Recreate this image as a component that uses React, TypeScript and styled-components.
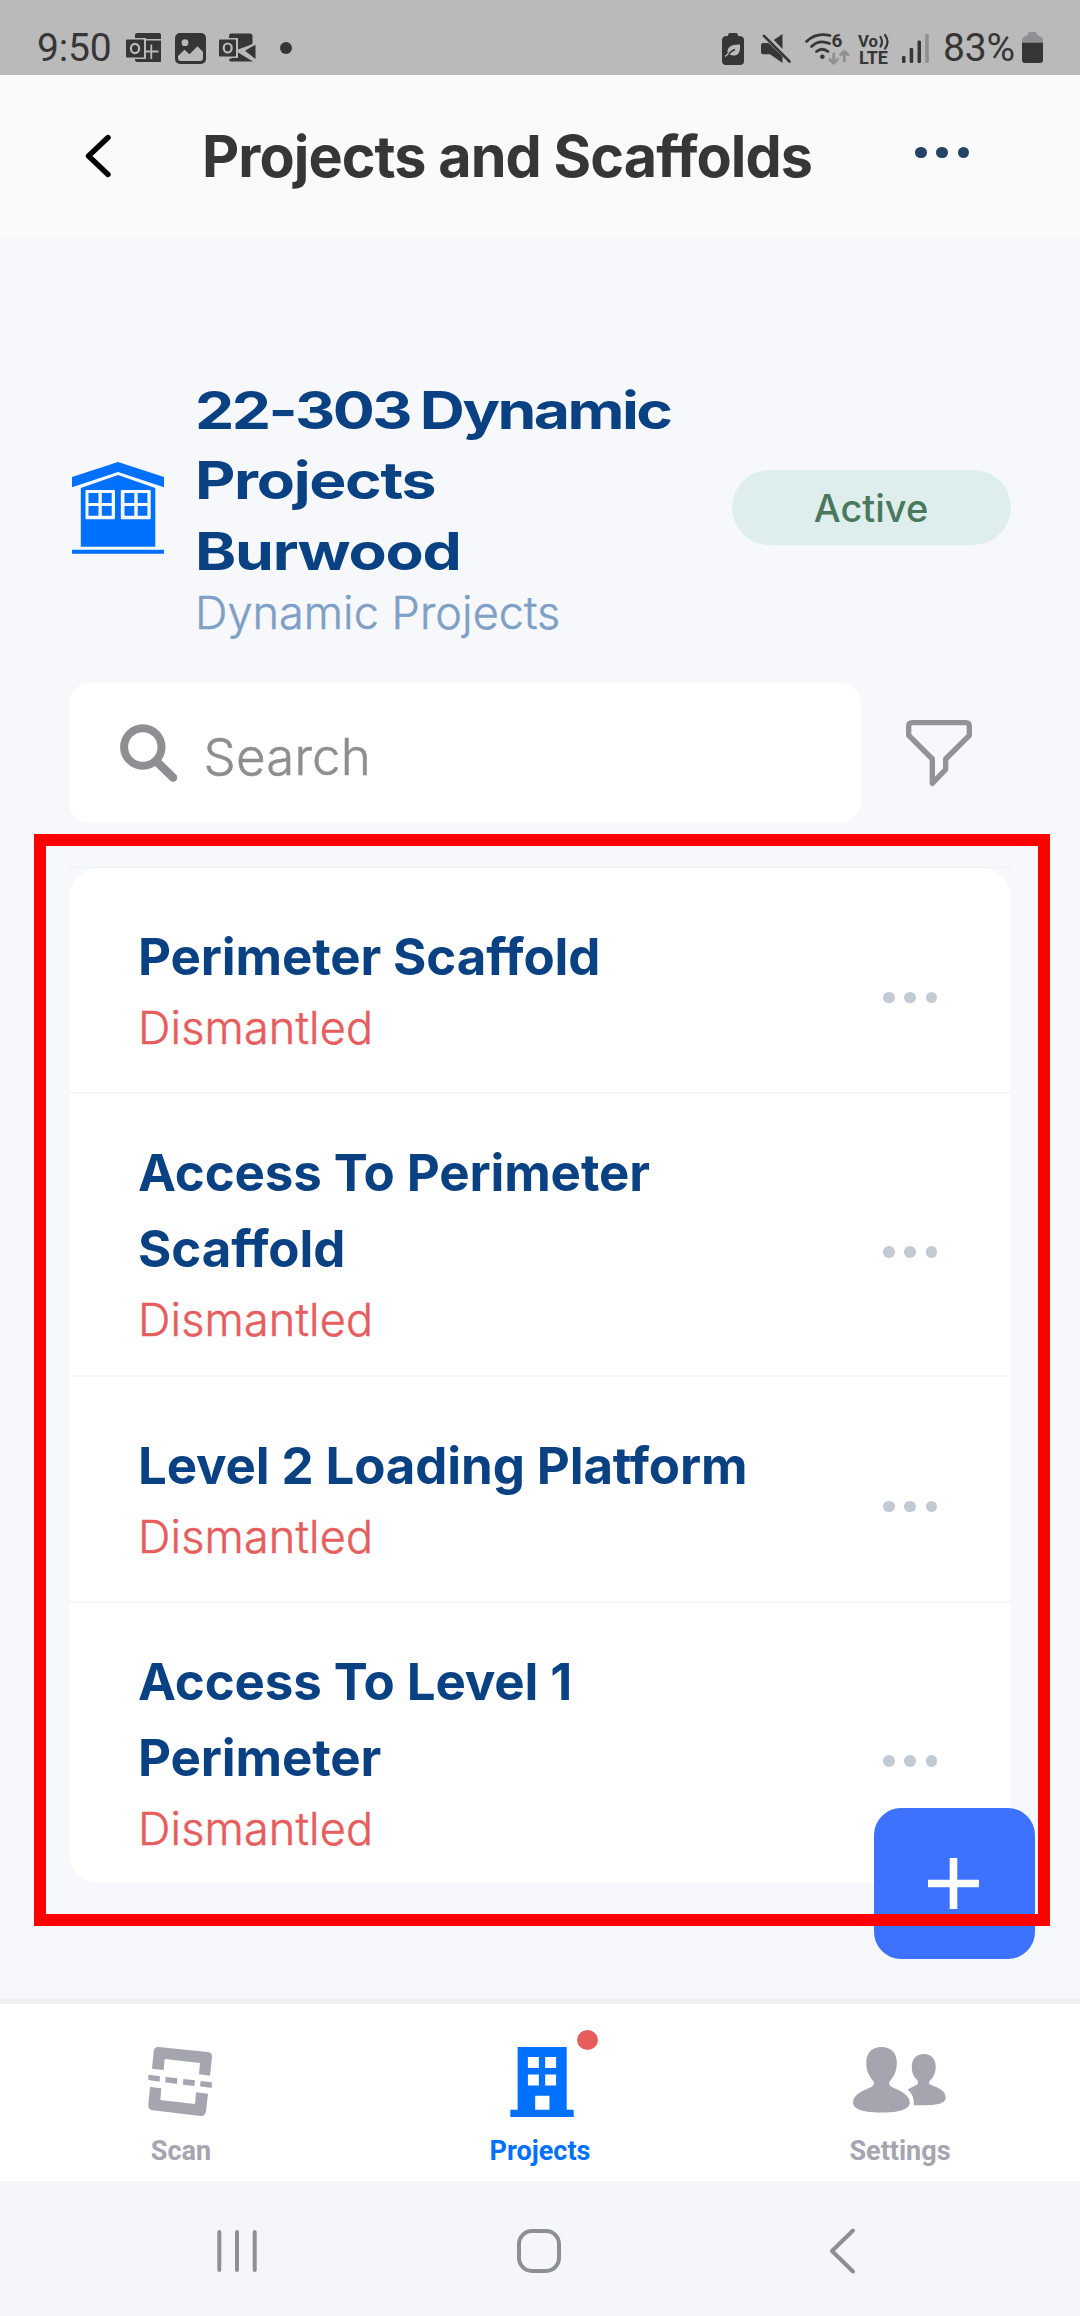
import React from "react";
import styled, { createGlobalStyle } from "styled-components";

const GlobalStyle = createGlobalStyle`
  * { box-sizing: border-box; }
  body { margin: 0; background: #f7f8fc; }
  svg { display: block; flex: none; overflow: visible; }
`;

const DARK = "#363636";
const NAVY = "#0a4182";
const BLUE = "#0071ff";
const MUTED = "#a5a5b0";

const Screen = styled.div`
  position: relative;
  display: flex;
  flex-direction: column;
  width: 1080px;
  height: 2316px;
  overflow: hidden;
  background: #f7f8fc;
  font-family: Inter, "Liberation Sans", sans-serif;
`;

const StatusBar = styled.div`
  display: flex;
  justify-content: space-between;
  align-items: flex-start;
  height: 75px;
  padding: 32px 37px 0;
  background: #bababa;
`;

const StatusGroup = styled.div`
  display: flex;
  align-items: flex-start;
`;

const StatusText = styled.span<{ $width: number }>`
  width: ${(p) => p.$width}px;
  font: 400 39px/32px Roboto, sans-serif;
  letter-spacing: -0.2px;
  color: ${DARK};
  white-space: nowrap;
`;

const StatusIcon = styled.svg<{ $gap: number; $top?: number }>`
  margin-left: ${(p) => p.$gap}px;
  margin-top: ${(p) => p.$top ?? 1}px;
`;

const Header = styled.header`
  display: flex;
  align-items: center;
  height: 162px;
  padding: 0 111px 0 85px;
  background: #fafafa;
`;

const Title = styled.h1`
  flex: 1;
  margin: 0 0 0 87px;
  font-size: 57.5px;
  line-height: 70px;
  font-weight: 700;
  letter-spacing: -0.93px;
  white-space: nowrap;
  color: ${DARK};
`;

const Dots = styled.span<{ $color: string }>`
  display: flex;
  gap: 9.6px;
  i {
    width: 11.5px;
    height: 11.5px;
    border-radius: 50%;
    background: ${(p) => p.$color};
  }
`;

const HeaderDots = styled(Dots)`
  margin-bottom: 7px;
`;

const Content = styled.main`
  flex: 1;
  padding: 138px 69px 0;
`;

const ProjectSummary = styled.section`
  display: flex;
  align-items: center;
  height: 265px;
  padding-left: 3px;
`;

const ProjectText = styled.div`
  flex: 1;
  margin-left: 32px;
`;

const ProjectName = styled.h2`
  width: 440px;
  margin: 1px 0 -1px -1.5px;
  transform: scaleX(1.2);
  transform-origin: left;
  font-size: 52px;
  line-height: 70.4px;
  font-weight: 700;
  word-spacing: -2px;
  color: ${NAVY};
  white-space: nowrap;
`;

const NameLine = styled.span<{ $tracking: number }>`
  display: block;
  letter-spacing: ${(p) => p.$tracking}px;
`;

const ClientName = styled.p`
  margin: 0 0 0 -1px;
  font-size: 45px;
  line-height: 54px;
  font-weight: 300;
  letter-spacing: 0.05px;
  -webkit-text-stroke: 0.5px currentColor;
  white-space: nowrap;
  color: #7e9fc6;
`;

const StatusPill = styled.span`
  display: flex;
  align-items: center;
  justify-content: center;
  width: 279px;
  height: 75px;
  padding-right: 1px;
  border-radius: 38px;
  background: #deeeec;
  font-size: 38px;
  font-weight: 500;
  color: #4a785c;
`;

const SearchRow = styled.div`
  display: flex;
  align-items: center;
  gap: 45px;
  margin-top: 43px;
`;

const SearchBox = styled.label`
  display: flex;
  align-items: center;
  width: 792px;
  height: 140px;
  padding: 0 0 0 51px;
  border-radius: 21px;
  background: #fff;
`;

const Placeholder = styled.span`
  margin: 8px 0 0 24.5px;
  font-size: 51px;
  line-height: 62px;
  font-weight: 300;
  letter-spacing: 0.2px;
  -webkit-text-stroke: 0.5px currentColor;
  color: #8e8e90;
`;

const ScaffoldPanel = styled.section`
  margin-top: 44px;
  border-top: 1px solid #f0f1f4;
`;

const ScaffoldList = styled.ul`
  height: 1015px;
  margin: 0;
  padding: 0;
  overflow: hidden;
  border-radius: 30px;
  background: #fff;
  list-style: none;
`;

const ScaffoldRow = styled.li`
  display: flex;
  align-items: center;
  justify-content: space-between;
  min-height: 226px;
  padding: 41px 74px 22px 69px;
  border-bottom: 2px solid #f5f6f8;
  &:last-child { border-bottom-color: transparent; }
`;

const ScaffoldName = styled.h3`
  width: 640px;
  margin: 0;
  font-size: 51px;
  line-height: 76px;
  font-weight: 700;
  letter-spacing: -0.12px;
  color: ${NAVY};
`;

const ScaffoldState = styled.p`
  margin: 0;
  font-size: 45px;
  line-height: 66px;
  font-weight: 300;
  letter-spacing: 0.15px;
  -webkit-text-stroke: 0.5px currentColor;
  color: #e55d5d;
`;

const RowDots = styled(Dots)`
  padding-top: 16px;
`;

const AddButton = styled.button`
  position: absolute;
  left: 874px;
  top: 1808px;
  display: grid;
  place-items: center;
  width: 161px;
  height: 151px;
  padding: 0 2px 0 0;
  border: 0;
  border-radius: 27px;
  background: #3c72ff;
`;

const Highlight = styled.div`
  position: absolute;
  left: 34px;
  top: 834px;
  width: 1016px;
  height: 1092px;
  border: 12px solid #ff0000;
  pointer-events: none;
`;

const TabBar = styled.nav`
  display: grid;
  grid-template-columns: repeat(3, 1fr);
  height: 182px;
  border-top: 5px solid #f0f0f4;
  background: #fff;
`;

const Tab = styled.a<{ $active?: boolean }>`
  display: flex;
  flex-direction: column;
  align-items: center;
  padding-top: 43px;
  font: 700 27px/32px Roboto, sans-serif;
  color: ${(p) => (p.$active ? BLUE : MUTED)};
`;

const TabIcon = styled.span<{ $shift?: number }>`
  position: relative;
  height: 87.5px;
  margin-left: ${(p) => p.$shift ?? 0}px;
`;

const TabLabel = styled.span<{ $shift?: number }>`
  margin-left: ${(p) => p.$shift ?? 0}px;
`;

const Badge = styled.span`
  position: absolute;
  left: 67px;
  top: -17px;
  width: 21px;
  height: 20px;
  border-radius: 50%;
  background: #e75d5d;
`;

const SystemRow = styled.div`
  display: flex;
  align-items: center;
  height: 135px;
  padding: 7px 0 2px 217px;
  background: #f5f6f9;
`;

const SystemSlot = styled.span<{ $width: number }>`
  width: ${(p) => p.$width}px;
`;

const SystemIcon = styled.svg`
  stroke: #8f8f8f;
  stroke-width: 4;
  stroke-linecap: round;
  stroke-linejoin: round;
  fill: none;
`;

const BG = "#bababa";

const CalendarNotice = () => (
  <StatusIcon $gap={1} width="35" height="29" viewBox="0 0 35 29">
    <path fill={DARK} d="M11 0H33Q35 0 35 2V6H9V2Q9 0 11 0ZM9 7.5H35V29H11Q9 29 9 27Z" />
    <path fill="none" stroke={BG} strokeWidth="1.8" d="M25.3 11.5V26M18.5 18.5H32.5" />
    <rect x="-1" y="5" width="21" height="21" fill={BG} />
    <rect y="6.5" width="18" height="18" rx="1" fill={DARK} />
    <ellipse cx="9" cy="15.5" rx="4.1" ry="4.6" fill="none" stroke={BG} strokeWidth="2.2" />
  </StatusIcon>
);

const PictureNotice = () => (
  <StatusIcon $gap={14} width="31" height="31" viewBox="0 0 31 31">
    <rect width="31" height="31" rx="5" fill={DARK} />
    <circle cx="10" cy="9.7" r="3.4" fill={BG} />
    <path fill={BG} d="M3 23 9.5 16.8 14.5 21.3 22.5 13.3 28 19V25Q28 28 25 28H6Q3 28 3 25Z" />
  </StatusIcon>
);

const MailNotice = () => (
  <StatusIcon $gap={13} width="37" height="29" viewBox="0 0 37 29">
    <path fill={DARK} d="M12 .5H31Q33.5 .5 33.5 3V11L20 18 10 10V3Q10 .5 12 .5Z" />
    <path fill={DARK} d="M36.5 11.5V26L26 17.8ZM19 19.5 34 28.5H12Q10 28.5 10 26.5L19 22Z" />
    <rect x="-1" y="5" width="20" height="20" fill={BG} />
    <rect y="6.5" width="17" height="17" rx="1" fill={DARK} />
    <ellipse cx="8.7" cy="15" rx="4" ry="4.5" fill="none" stroke={BG} strokeWidth="2.2" />
    <path fill="none" stroke={BG} strokeWidth="1.8" d="M36.5 11 19 17.5 36.5 27.5" />
  </StatusIcon>
);

const SaverIcon = () => (
  <StatusIcon $gap={0} width="22" height="32" viewBox="0 0 22 32">
    <path fill={DARK} d="M8 0H14Q16 0 16 3H18Q22 3.5 22 7V28Q22 32 18 32H4Q0 32 0 28V7Q0 3.5 4 3H6Q6 0 8 0Z" />
    <path fill={BG} d="M18 11.5Q5 11 5.5 19.5L7 21Q12 24 16 21Q18.5 18 18 11.5Z" />
    <path fill="none" stroke={DARK} strokeWidth="1.6" d="M5 23.5Q8 18.5 13 16.5" />
    <path fill="none" stroke={BG} strokeWidth="1.4" d="M3 23.5 6.5 20.5" />
  </StatusIcon>
);

const MuteIcon = () => (
  <StatusIcon $gap={17} $top={2} width="30" height="29" viewBox="0 0 30 29">
    <path fill={DARK} d="M12.8 6 21.5 0V15ZM2 9H7.5L21.5 22.5V29L9 20.3H2Q0 20.3 0 18V11Q0 9 2 9Z" />
    <path stroke={DARK} strokeWidth="2.6" strokeLinecap="round" d="M3 1.8 28.5 27.5" />
  </StatusIcon>
);

const WifiIcon = () => (
  <StatusIcon $gap={14} width="45" height="32" viewBox="0 0 45 32">
    <g fill="none" stroke={DARK} strokeWidth="2.8" strokeLinecap="round">
      <path d="M1.5 8.5Q11 -1 25 2.5" />
      <path d="M6.5 13.5Q14 6 24.5 10.5" />
      <path d="M11.5 18.5Q17 14 23 18.5" />
    </g>
    <circle cx="17.4" cy="23.7" r="2.3" fill={DARK} />
    <text x="26.5" y="13.8" fontFamily="Roboto, sans-serif" fontWeight="700" fontSize="19" fill={DARK}>6</text>
    <path fill="none" stroke="#8f8f94" strokeWidth="2.8" strokeLinecap="round" strokeLinejoin="round" d="M28.7 21V30M25 26.5 28.7 30.3 32.4 26.5M39.3 28V18.5M35.6 21.8 39.3 18.2 43 21.8" />
  </StatusIcon>
);

const VolteIcon = () => (
  <StatusIcon $gap={8} $top={2} width="31" height="30" viewBox="0 0 31 30">
    <g fontFamily="Roboto, sans-serif" fontWeight="700" fill={DARK}>
      <text x="0" y="12.5" fontSize="17" textLength="20" lengthAdjust="spacingAndGlyphs">Vo</text>
      <text x="1" y="30" fontSize="18" textLength="29" lengthAdjust="spacingAndGlyphs">LTE</text>
    </g>
    <path fill="none" stroke={DARK} strokeWidth="2.2" strokeLinecap="round" d="M22.5 3Q25.5 8 22.5 12.5M27 .8Q32 8 27 14.5" />
  </StatusIcon>
);

const SignalIcon = () => (
  <StatusIcon $gap={13} $top={2} width="27" height="29" viewBox="0 0 27 29">
    <g fill={DARK}>
      <rect y="22" width="3.5" height="7" rx="1.2" />
      <rect x="7.7" y="14" width="3.5" height="15" rx="1.2" />
      <rect x="15.5" y="6.5" width="3.5" height="22.5" rx="1.2" />
    </g>
    <rect x="23.2" y="0" width="3.6" height="29" rx="1.2" fill="#8f8f94" />
  </StatusIcon>
);

const BatteryIcon = () => (
  <StatusIcon $gap={8} $top={0} width="21" height="31" viewBox="0 0 21 31">
    <path fill="#8f8f94" d="M8 0H13Q15 0 15.5 3.5Q20 4.5 21 7V11H0V7Q1 4.5 5.5 3.5Q6 0 8 0Z" />
    <path fill={DARK} d="M0 10.7H21V28Q21 31 18 31H3Q0 31 0 28Z" />
  </StatusIcon>
);

const BackIcon = () => (
  <svg width="30" height="44" viewBox="0 0 30 44">
    <path d="M23 3.5 3.5 22 23 40.5" fill="none" stroke="#000" strokeWidth="5.4" strokeLinecap="round" strokeLinejoin="round" />
  </svg>
);

const HouseIcon = () => (
  <svg width="92" height="92" viewBox="0 0 92 92">
    <g fill={BLUE}>
      <path d="M0 15 46 0 92 15V25.3L46 10 0 25.3Z" />
      <path fillRule="evenodd" d="M8.8 26 46 13 83.3 26V84.7H8.8ZM14.5 28Q13.5 28 13.5 29V56Q13.5 57.2 14.5 57.2H42Q43 57.2 43 56V29Q43 28 42 28ZM49.8 28Q48.8 28 48.8 29V56Q48.8 57.2 49.8 57.2H77.7Q78.7 57.2 78.7 56V29Q78.7 28 77.7 28Z" />
      <path d="M16.5 31H26.5V41H16.5ZM29.8 31H39.7V41H29.8ZM16.5 44H26.5V53.7H16.5ZM29.8 44H39.7V53.7H29.8ZM52.5 31H62.3V41H52.5ZM65.7 31H75.4V41H65.7ZM52.5 44H62.3V53.7H52.5ZM65.7 44H75.4V53.7H65.7ZM0 87.7H92V91.7H0Z" />
    </g>
  </svg>
);

const SearchIcon = () => (
  <svg width="59" height="57" viewBox="0 -2 59 57">
    <g fill="none" stroke="#8e8e93" strokeLinecap="round">
      <circle cx="22.8" cy="20" r="18.7" strokeWidth="8" />
      <path d="M37 35 53 50.5" strokeWidth="8.6" />
    </g>
  </svg>
);

const FilterIcon = () => (
  <svg width="66" height="66" viewBox="738 840 198 198">
    <path d="M757 848H917Q928 848 928 859V886L857 957V988L817 1030V957L746 886V859Q746 848 757 848Z" fill="none" stroke="#939397" strokeWidth="16" strokeLinejoin="round" />
  </svg>
);

const PlusIcon = () => (
  <svg width="51" height="51" viewBox="0 0 51 51">
    <path d="M25.5 0V51M0 25.5H51" stroke="#fff" strokeWidth="7.6" />
  </svg>
);

const ScanIcon = () => (
  <svg width="64" height="70" viewBox="144 171 192 210" fill={MUTED}>
    <path d="M176 171 324 186Q337 188 336 201L330 257 297 253 300 219 194 207 191 240 156 236 161 184Q163 170 176 171Z" />
    <path d="M150 291 184 295 181 330 285 342 288 307 324 311 318 364Q315 379 302 378L158 361Q144 358 145 344Z" />
    <path d="M145 254 180 259 179 275 145 270ZM197 261 232 265 231 282 196 277ZM250 267 285 271 283 288 249 284ZM302 273 336 277 335 294 300 289Z" />
  </svg>
);

const BuildingIcon = () => (
  <svg width="64" height="70" viewBox="1231 171 191 211">
    <path fill={BLUE} fillRule="evenodd" d="M1253 171H1401V360H1422V382H1231V360H1253ZM1284 201V234H1317V201ZM1336 201V234H1369V201ZM1284 254V287H1317V254ZM1336 254V287H1369V254ZM1306 318V360H1349V318Z" />
  </svg>
);

const PeopleIcon = () => (
  <svg width="93" height="66" viewBox="879 171 280 198" fill={MUTED}>
    <path d="M965 171C995 171 1011 190 1011 218C1011 245 1000 262 992 271C986 279 986 284 994 290C1010 298 1050 310 1050 338C1050 365 1000 368 965 368C930 368 879 365 879 338C879 310 920 298 936 290C944 284 944 279 938 271C930 262 919 245 919 218C919 190 935 171 965 171Z" />
    <path d="M1092 192C1115 192 1128 208 1128 230C1128 250 1120 262 1113 269C1107 276 1106 281 1113 284C1130 291 1158 300 1158 322C1158 343 1130 347 1062 346C1063 325 1058 310 1043 299C1052 293 1065 288 1071 284C1077 280 1076 274 1070 268C1062 260 1056 248 1056 230C1056 208 1069 192 1092 192Z" />
  </svg>
);

const scaffolds = [
  { name: "Perimeter Scaffold", state: "Dismantled" },
  { name: "Access To Perimeter Scaffold", state: "Dismantled" },
  { name: "Level 2 Loading Platform", state: "Dismantled" },
  { name: "Access To Level 1 Perimeter", state: "Dismantled" },
];

export default function App() {
  return (
    <Screen>
      <GlobalStyle />
      <StatusBar>
        <StatusGroup>
          <StatusText $width={88}>9:50</StatusText>
          <CalendarNotice />
          <PictureNotice />
          <MailNotice />
          <StatusIcon $gap={24} $top={10} width="12" height="12" viewBox="0 0 12 12">
            <circle cx="6" cy="6" r="6" fill={DARK} />
          </StatusIcon>
        </StatusGroup>
        <StatusGroup>
          <SaverIcon />
          <MuteIcon />
          <WifiIcon />
          <VolteIcon />
          <SignalIcon />
          <StatusIcon $gap={14} width="0" height="1" />
          <StatusText $width={71}>83%</StatusText>
          <BatteryIcon />
        </StatusGroup>
      </StatusBar>

      <Header>
        <BackIcon />
        <Title>Projects and Scaffolds</Title>
        <HeaderDots $color="#234467"><i /><i /><i /></HeaderDots>
      </Header>

      <Content>
        <ProjectSummary>
          <HouseIcon />
          <ProjectText>
            <ProjectName>
              <NameLine $tracking={-2.1}>22-303 Dynamic</NameLine>
              <NameLine $tracking={-1.1}>Projects</NameLine>
              <NameLine $tracking={-1}>Burwood</NameLine>
            </ProjectName>
            <ClientName>Dynamic Projects</ClientName>
          </ProjectText>
          <StatusPill>Active</StatusPill>
        </ProjectSummary>

        <SearchRow>
          <SearchBox>
            <SearchIcon />
            <Placeholder>Search</Placeholder>
          </SearchBox>
          <FilterIcon />
        </SearchRow>

        <ScaffoldPanel>
          <ScaffoldList>
            {scaffolds.map((s) => (
              <ScaffoldRow key={s.name}>
                <div>
                  <ScaffoldName>{s.name}</ScaffoldName>
                  <ScaffoldState>{s.state}</ScaffoldState>
                </div>
                <RowDots $color="#c2cbd3"><i /><i /><i /></RowDots>
              </ScaffoldRow>
            ))}
          </ScaffoldList>
        </ScaffoldPanel>
      </Content>

      <TabBar>
        <Tab>
          <TabIcon><ScanIcon /></TabIcon>
          <TabLabel $shift={2}>Scan</TabLabel>
        </Tab>
        <Tab $active>
          <TabIcon $shift={4}><BuildingIcon /><Badge /></TabIcon>
          <TabLabel>Projects</TabLabel>
        </Tab>
        <Tab>
          <TabIcon $shift={-2}><PeopleIcon /></TabIcon>
          <TabLabel>Settings</TabLabel>
        </Tab>
      </TabBar>

      <SystemRow>
        <SystemSlot $width={300}>
          <SystemIcon width="40" height="44" viewBox="0 0 40 44"><path d="M2.3 3V41M20 3V41M37.7 3V41" /></SystemIcon>
        </SystemSlot>
        <SystemSlot $width={312}>
          <SystemIcon width="44" height="44" viewBox="0 0 44 44"><rect x="2" y="2" width="40" height="40" rx="13" /></SystemIcon>
        </SystemSlot>
        <SystemIcon width="26" height="44" viewBox="0 0 26 44"><path d="M24 1.5 3 22 24 42.5" /></SystemIcon>
      </SystemRow>

      <AddButton aria-label="Add scaffold"><PlusIcon /></AddButton>
      <Highlight />
    </Screen>
  );
}
